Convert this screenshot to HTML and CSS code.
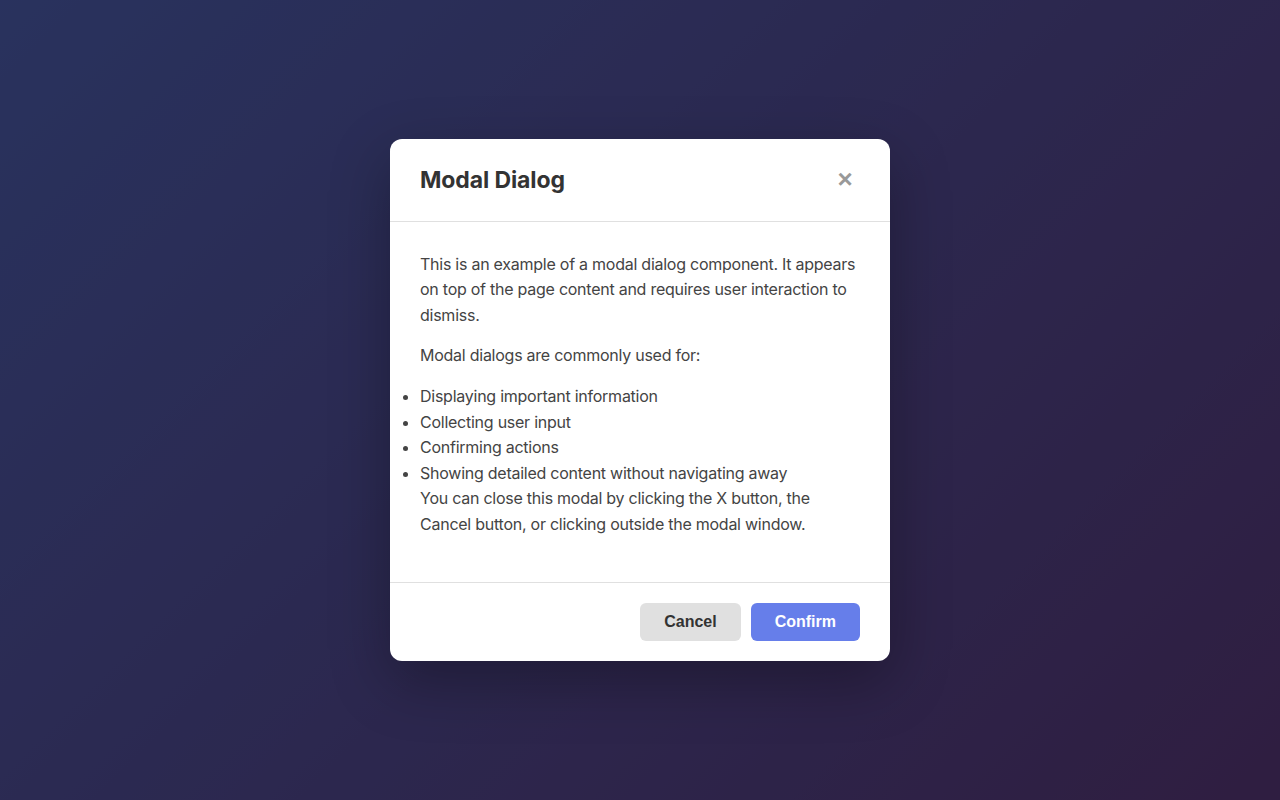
FILE: index.html
```html
<!DOCTYPE html>
<html lang="en">
<head>
<meta charset="utf-8">
<title>Modal Dialog</title>
<link rel="stylesheet" href="styles.css">
</head>
<body>
<div class="page">
  <div class="overlay">
    <div class="modal">
      <div class="modal-header">
        <h2 class="modal-title">Modal Dialog</h2>
        <button class="close-btn" aria-label="Close">&times;</button>
      </div>
      <div class="modal-body">
        <p>This is an example of a modal dialog component. It appears on top of the page content and requires user interaction to dismiss.</p>
        <p>Modal dialogs are commonly used for:</p>
        <ul>
          <li>Displaying important information</li>
          <li>Collecting user input</li>
          <li>Confirming actions</li>
          <li>Showing detailed content without navigating away</li>
        </ul>
        <p>You can close this modal by clicking the X button, the Cancel button, or clicking outside the modal window.</p>
      </div>
      <div class="modal-footer">
        <button class="btn btn-cancel">Cancel</button>
        <button class="btn btn-confirm">Confirm</button>
      </div>
    </div>
  </div>
</div>
</body>
</html>
```
FILE: styles.css
```css
* { box-sizing: border-box; }
html, body { margin: 0; padding: 0; height: 100%; }
body {
  font-family: Inter, "Noto Sans", sans-serif;
  background: linear-gradient(135deg, #667eea 0%, #764ba2 100%);
}
.page { height: 100%; }
.overlay {
  height: 100%;
  background: rgba(0, 0, 0, 0.6);
  display: flex;
  align-items: center;
  justify-content: center;
}
.modal {
  width: 500px;
  background: #fff;
  border-radius: 12px;
  box-shadow: 0 20px 60px rgba(0, 0, 0, 0.3);
  overflow: hidden;
}
.modal-header {
  display: flex;
  align-items: center;
  justify-content: space-between;
  padding: 24px 30px;
  border-bottom: 1px solid #e0e0e0;
}
.modal-title {
  margin: 0;
  font-size: 23px;
  line-height: 34px;
  font-weight: 700;
  letter-spacing: -0.1px;
  color: #333;
}
.close-btn {
  border: none;
  background: none;
  padding: 0;
  width: 30px;
  height: 30px;
  font-family: "Liberation Sans", Arial, sans-serif;
  font-size: 26px;
  font-weight: 700;
  line-height: 30px;
  color: #999;
  cursor: pointer;
  margin-top: -1px;
}
.modal-body {
  padding: 30px 30px 30px;
  color: #444;
  font-size: 16px;
  line-height: 1.6;
  letter-spacing: -0.25px;
}
.modal-body p { margin: 0 0 15px; }
.modal-body ul { margin: 0; padding: 0; }
.modal-footer {
  display: flex;
  justify-content: flex-end;
  gap: 10px;
  padding: 20px 30px;
  border-top: 1px solid #e0e0e0;
}
.btn {
  border: none;
  border-radius: 6px;
  height: 38px;
  padding: 0 24px;
  font-family: "Liberation Sans", Arial, sans-serif;
  font-size: 16px;
  font-weight: 700;
  cursor: pointer;
}
.btn-cancel { background: #e0e0e0; color: #333; }
.btn-confirm { background: #667eea; color: #fff; }
```
